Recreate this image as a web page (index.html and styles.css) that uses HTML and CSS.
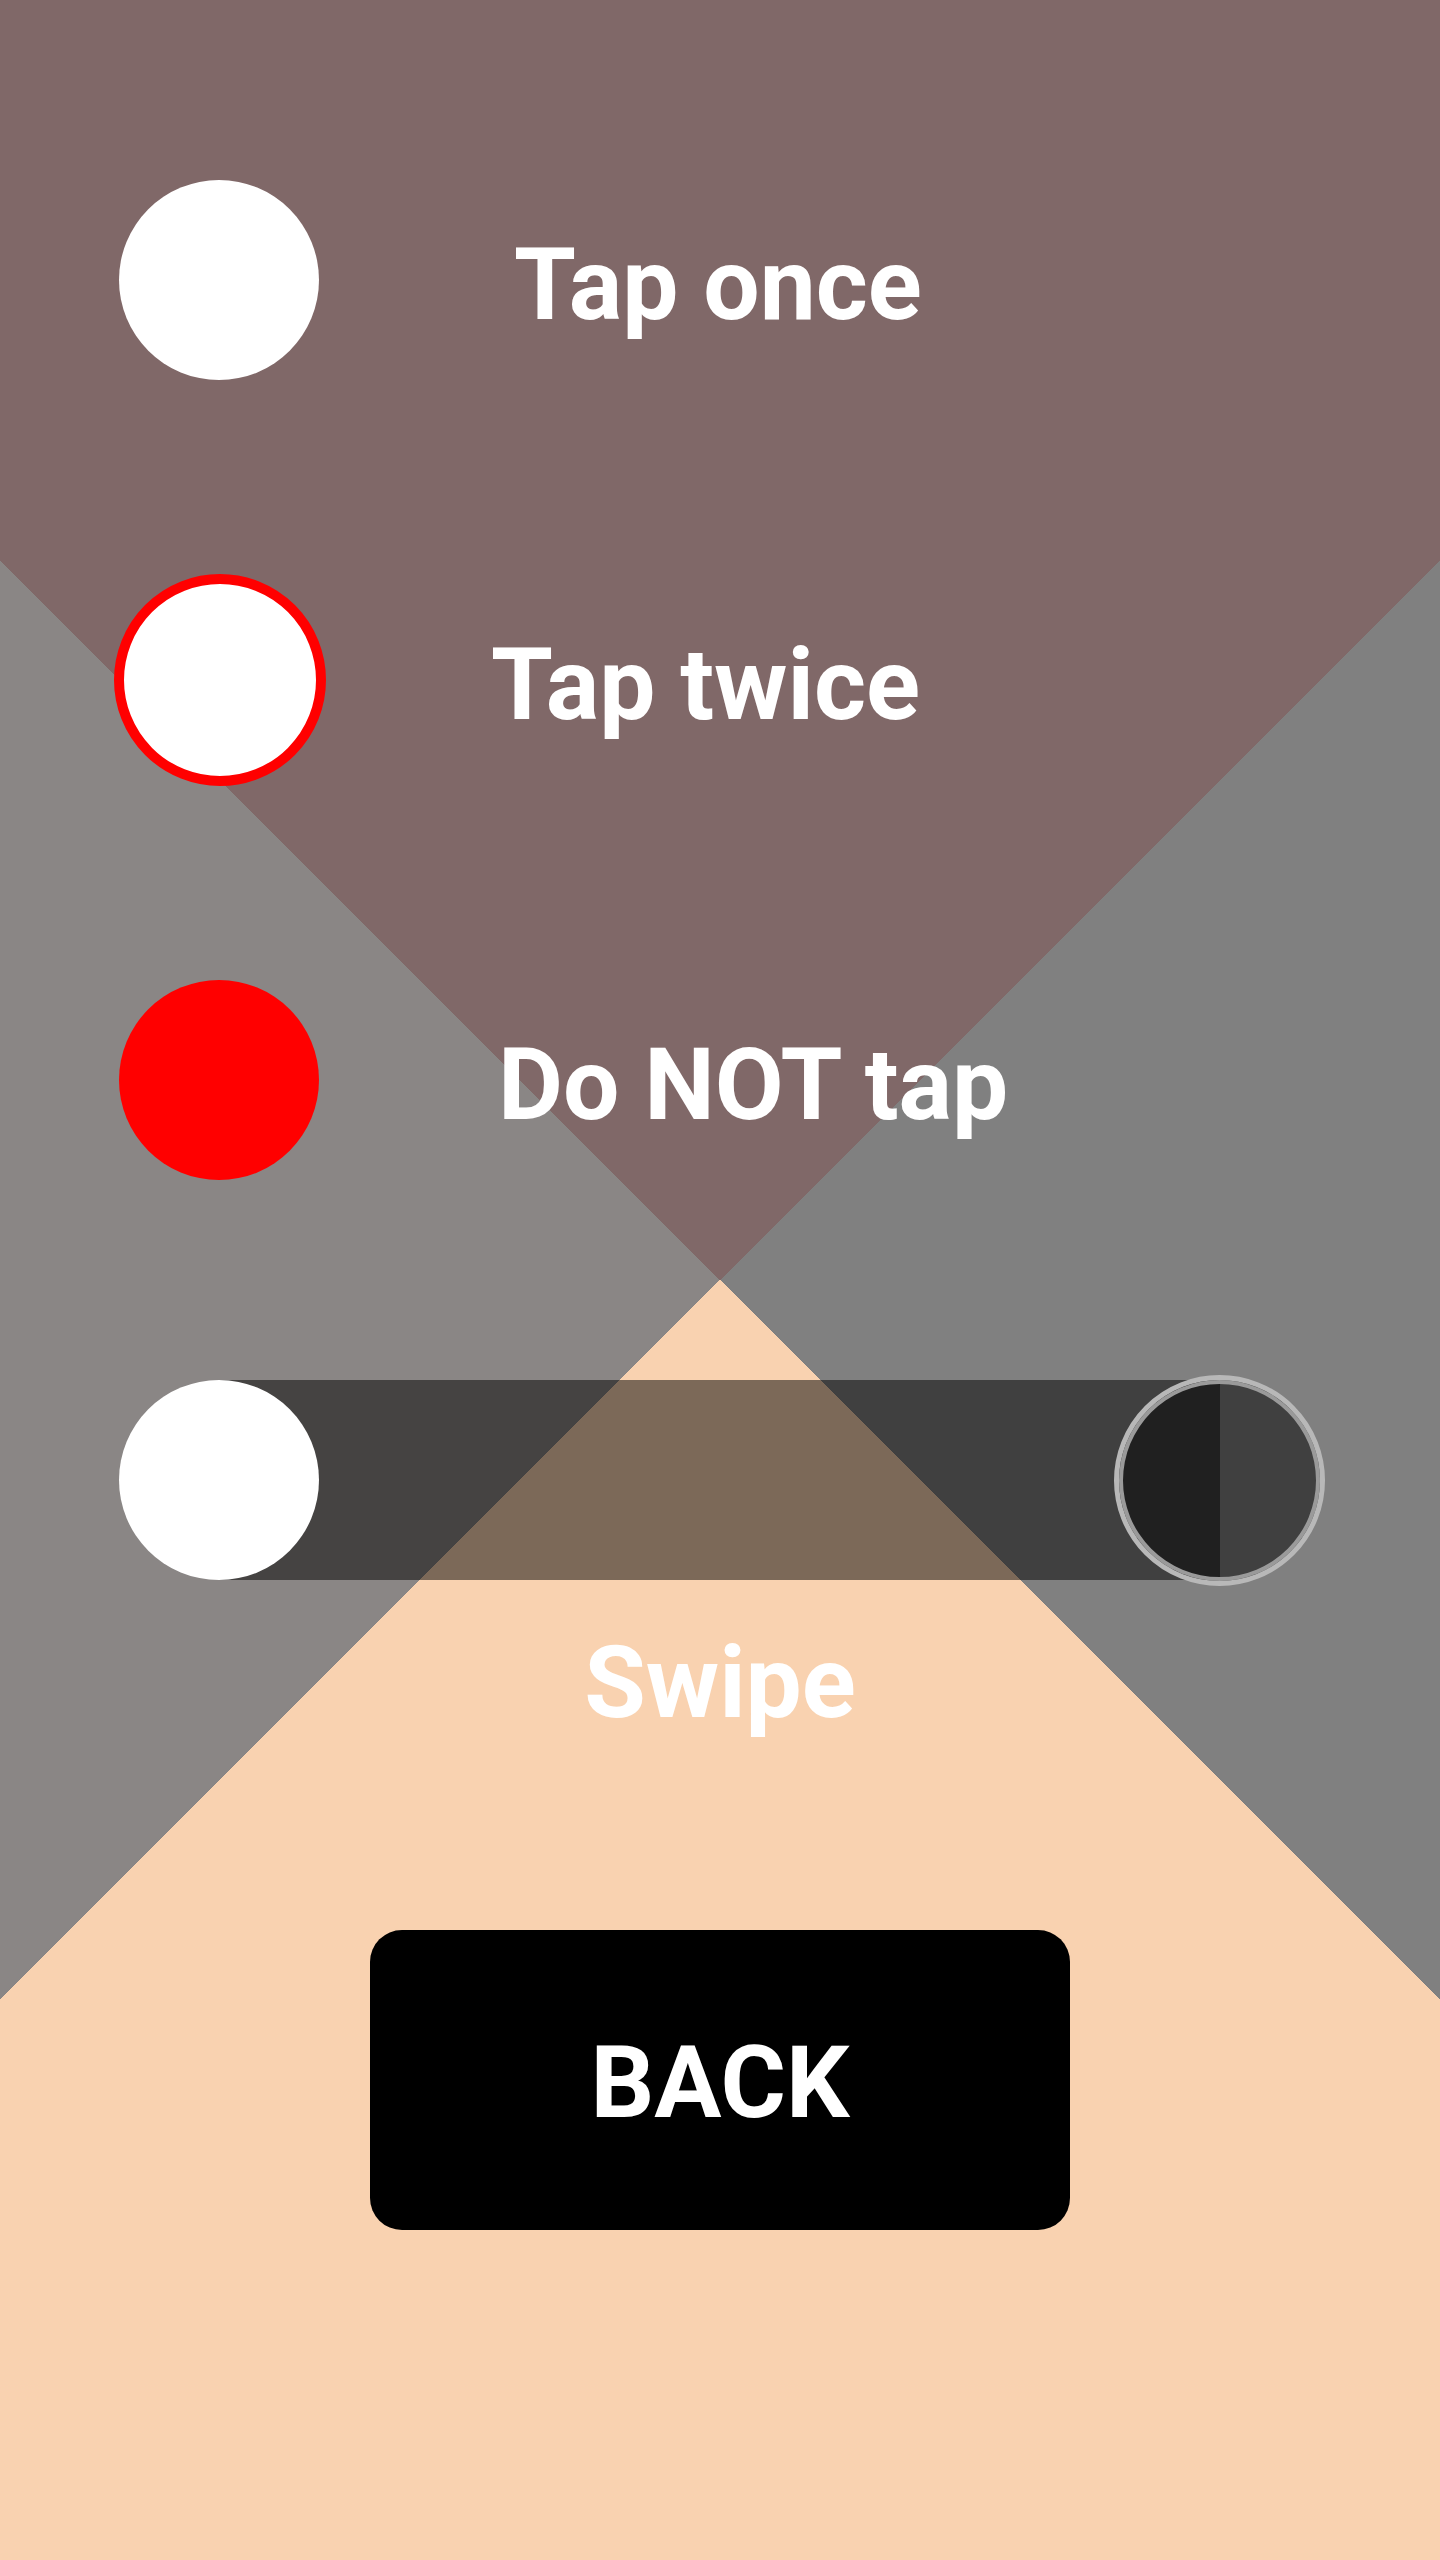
FILE: index.html
```html
<!DOCTYPE html>
<html lang="en">
<head>
<meta charset="utf-8">
<title>Gestures</title>
<link rel="stylesheet" href="styles.css">
</head>
<body>
<main class="screen">
  <section class="rows">
    <div class="row">
      <span class="dot dot--white"></span>
      <span class="label label--once">Tap once</span>
    </div>
    <div class="row">
      <span class="dot dot--ringed"></span>
      <span class="label label--twice">Tap twice</span>
    </div>
    <div class="row">
      <span class="dot dot--red"></span>
      <span class="label label--not">Do NOT tap</span>
    </div>
    <div class="slider">
      <span class="dot dot--white knob-start"></span>
      <span class="knob-end"></span>
    </div>
  </section>
  <p class="swipe">Swipe</p>
  <button class="back" type="button">BACK</button>
</main>
</body>
</html>
```
FILE: styles.css
```css
html, body {
  margin: 0;
  padding: 0;
}

.screen {
  box-sizing: border-box;
  display: flex;
  flex-direction: column;
  height: 2560px;
  padding-top: 180px;
  background: conic-gradient(from 0deg at 50% 50%,
    #806868 0deg 45deg,
    #808080 45deg 135deg,
    #f9d2b0 135deg 225deg,
    #8a8685 225deg 315deg,
    #806868 315deg 360deg);
  font-family: Roboto, "Liberation Sans", sans-serif;
  font-weight: 700;
  color: #ffffff;
  overflow: hidden;
}

.rows {
  display: flex;
  flex-direction: column;
  gap: 200px;
  padding-left: 119px;
}

.row {
  display: flex;
  align-items: center;
  height: 200px;
}

.dot {
  flex: none;
  width: 200px;
  height: 200px;
  border-radius: 50%;
}

.dot--white {
  background: #ffffff;
}

.dot--red {
  background: #ff0000;
}

.dot--ringed {
  box-sizing: border-box;
  width: 212px;
  height: 212px;
  margin-left: -5px;
  margin-right: -7px;
  border: 10px solid #ff0000;
  background: #ffffff;
}

.label {
  font-size: 100px;
  line-height: 120px;
  padding-top: 10px;
  white-space: nowrap;
}

.label--once {
  margin-left: 195px;
}

.label--twice {
  margin-left: 172px;
}

.label--not {
  margin-left: 179px;
}

.slider {
  display: flex;
  justify-content: space-between;
  align-items: center;
  width: 1001px;
  height: 200px;
  margin-left: 100px;
  background: rgba(0, 0, 0, 0.5);
}

.knob-start {
  margin-left: -100px;
}

.knob-end {
  flex: none;
  box-sizing: border-box;
  width: 211px;
  height: 211px;
  margin-right: -105px;
  border-radius: 50%;
  border: 5px solid #b8b8b8;
  box-shadow: inset 0 0 0 4px #9a9a9a;
  background: rgba(0, 0, 0, 0.5);
}

.swipe {
  margin: 53px 0 0;
  font-size: 100px;
  line-height: 100px;
  text-align: center;
}

.back {
  box-sizing: border-box;
  display: flex;
  align-items: center;
  justify-content: center;
  width: 700px;
  height: 300px;
  margin: 197px auto 0;
  padding: 5px 0 0;
  border: none;
  border-radius: 32px;
  background: #000000;
  color: #ffffff;
  font-family: inherit;
  font-weight: 700;
  font-size: 100px;
  line-height: 120px;
}
```
